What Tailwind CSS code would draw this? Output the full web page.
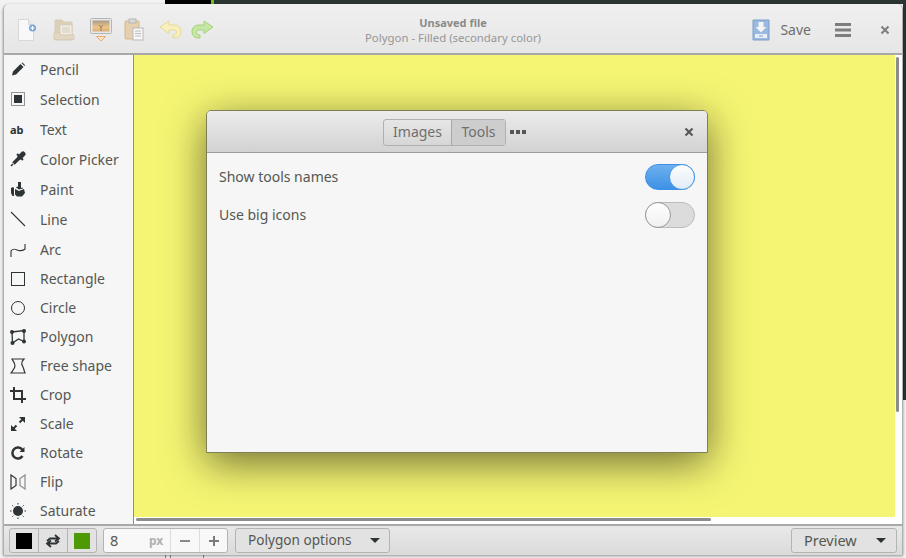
<!DOCTYPE html>
<html>
  <head>
    <meta charset="utf-8">
    <title>Drawing</title>
    <script src="https://cdn.jsdelivr.net/npm/@tailwindcss/browser@4"></script>
  </head>

  <body class="relative w-[906px] h-[558px] overflow-hidden bg-[#f2f2f2] font-['Noto_Sans',sans-serif]">
    <!-- desktop behind the window -->
    <div class="absolute left-[165px] top-0 w-[46px] h-[4px] bg-black"></div>
    <div class="absolute left-[211px] top-0 w-[3px] h-[4px] bg-[#73c016]"></div>
    <div class="absolute left-[214px] top-0 w-[692px] h-[4px] bg-[#2a3433]"></div>
    <div class="absolute left-[903px] top-0 w-[3px] h-[400px] bg-[#2a3433]"></div>
    <div class="absolute left-[165px] top-[555px] w-px h-[3px] bg-[#888]"></div>
    <div class="absolute left-[170px] top-[555px] w-px h-[3px] bg-[#888]"></div>
    <div class="absolute left-[203px] top-[555px] w-px h-[3px] bg-[#888]"></div>

    <!-- main window -->
    <div class="absolute left-[3px] top-[4px] w-[900px] h-[551px] flex flex-col rounded-t-[6px] overflow-hidden border-l border-r border-[#b0b0b0] bg-[#f6f6f6] shadow-[0_1px_3px_rgba(0,0,0,0.4)]">
      <!-- header bar -->
      <header class="h-[51px] shrink-0 grid grid-cols-[1fr_auto_1fr] items-center border-b-2 border-[#a8a8a8] bg-gradient-to-b from-[#f0f0f0] to-[#e6e6e6]">
        <div class="flex items-center pl-[13px] pt-[2px]">
          <svg class="w-[20px] h-[24px]" viewBox="0 0 20 24">
            <path d="M1.5 1.5h10l5 5v16h-15z" fill="#f8f8f8" stroke="#d8d8d8"/>
            <path d="M11.5 1.5v5h5" fill="#e8e8e8" stroke="#d8d8d8"/>
            <circle cx="15.5" cy="10" r="3.6" fill="#7da7d9"/>
            <path d="M13.5 10h4M15.5 8v4" stroke="#fff" stroke-width="1.2"/>
          </svg>
          <svg class="ml-[16px] w-[22px] h-[24px]" viewBox="0 0 22 24">
            <path d="M2 2h7l2 2h8v18H2z" fill="#dccfb9" stroke="#d8ccb6"/>
            <path d="M7 7h12v10H7z" fill="#f3efe6" stroke="#d6cdbb"/>
            <path d="M9 10h8M9 12h8M9 14h8" stroke="#cfc8ba"/>
            <path d="M1 15h6l1 2h13v4.500H1z" fill="#e3d7c3" stroke="#d8ccb6"/>
          </svg>
          <svg class="ml-[15px] w-[22px] h-[24px]" viewBox="0 0 22 24">
            <defs>
              <linearGradient id="sunset" x1="0" y1="0" x2="0" y2="1">
                <stop offset="0" stop-color="#a89c8c"/>
                <stop offset="0.6" stop-color="#eec584"/>
                <stop offset="1" stop-color="#d9ae7a"/>
              </linearGradient>
            </defs>
            <rect x="0.500" y="0.500" width="21" height="15" rx="1" fill="#e8e8e8" stroke="#b5b5b5"/>
            <rect x="2.500" y="2.500" width="17" height="11" fill="url(#sunset)"/>
            <path d="M11 13V8M11 9.500L9 7M11 9.500L13 7" stroke="#85766a" stroke-width="0.800" fill="none"/>
            <path d="M6.500 18.500h9l-4.500 4.500z" fill="#fbe7d0" stroke="#eda868"/>
          </svg>
          <svg class="ml-[12px] w-[20px] h-[24px]" viewBox="0 0 20 24">
            <rect x="1" y="3" width="14" height="18" rx="1" fill="#e6cfae" stroke="#d2b78f"/>
            <rect x="5" y="1" width="7" height="4" fill="#d8d8d8" stroke="#b5b5b5"/>
            <rect x="9" y="10" width="10" height="12" fill="#f8f8f8" stroke="#b9b9b9"/>
            <path d="M11 13h6M11 15.500h6M11 18h6" stroke="#b9b9b9"/>
          </svg>
          <svg class="ml-[15px] w-[23px] h-[19px]" viewBox="0 0 23 19">
            <path d="M10 1L1 7l9 6.500V10h4.500c2 0 3 .8 3 2.300S16 15 14 15v3h1.500c4 0 6.500-2.500 6.500-6.500S19 5 15 5h-5z" fill="#f7efc0" stroke="#e6d98e"/>
          </svg>
          <svg class="ml-[9px] w-[23px] h-[19px]" viewBox="0 0 23 19">
            <path d="M13 1l9 6-9 6.500V10H8.500c-2 0-3 .8-3 2.300S7 15 9 15v3H7.500C3.500 18 1 15.500 1 11.500S4 5 8 5h5z" fill="#c5e6a4" stroke="#a4d27a"/>
          </svg>
        </div>
        <div class="pt-[2px] text-center leading-[15px]">
          <div class="text-[11px] font-bold text-[#8a8a8a]">Unsaved file</div>
          <div class="text-[11.400px] text-[#969696]">Polygon - Filled (secondary color)</div>
        </div>
        <div class="flex items-center justify-end pr-[12px] pt-[2px]">
          <svg class="w-[18px] h-[22px]" viewBox="0 0 18 22">
            <path d="M1 1h16v20H1z" fill="#9ab9e0" stroke="#7f9fc8"/>
            <path d="M6.500 3h5v5h3l-5.500 5.500L3.500 8h3z" fill="#f4f4f4"/>
            <rect x="3" y="15" width="12" height="4" fill="#e8eef6"/>
            <path d="M7 17h4" stroke="#7f9fc8"/>
          </svg>
          <span class="ml-[10px] text-[14px] text-[#6e6e6e]">Save</span>
          <svg class="ml-[24px] w-[16px] h-[16px]" viewBox="0 0 16 16" fill="#7e7e7e">
            <rect y="1" width="16" height="3"/><rect y="6.500" width="16" height="3"/><rect y="12" width="16" height="3"/>
          </svg>
          <svg class="ml-[29px] w-[10px] h-[10px]" viewBox="0 0 10 10" stroke="#7e7e7e" stroke-width="2">
            <path d="M1.500 1.500l7 7M8.500 1.500l-7 7"/>
          </svg>
        </div>
      </header>

      <div class="flex-1 flex min-h-0">
        <!-- tools list -->
        <aside class="w-[129px] shrink-0 overflow-hidden bg-[#f6f6f6] text-[14px] text-[#555753] border-r border-[#8e8e8e] box-content">
          <div class="h-[30px] flex items-center pl-[6px] pb-[2px] gap-[14px]">
            <svg class="w-[16px] h-[16px]" viewBox="0 0 16 16" fill="#2e3436"><path d="M2 14.500l1-4L10.500 3l3 3L6 13.500zM11.500 2l1-.5 2.500 2.500-.5 1z"/></svg>
            <span>Pencil</span>
          </div>
          <div class="h-[30px] flex items-center pl-[6px] pb-[2px] gap-[14px]">
            <svg class="w-[16px] h-[16px]" viewBox="0 0 16 16"><rect x="4" y="4" width="8" height="8" fill="#2e3436"/><rect x="1.500" y="1.500" width="13" height="13" fill="none" stroke="#2e3436" stroke-dasharray="1 1"/></svg>
            <span>Selection</span>
          </div>
          <div class="h-[30px] flex items-center pl-[6px] pb-[2px] gap-[14px]">
            <span class="w-[16px] text-[11px] leading-none font-bold text-[#2e3436]">ab</span>
            <span>Text</span>
          </div>
          <div class="h-[30px] flex items-center pl-[6px] pb-[2px] gap-[14px]">
            <svg class="w-[16px] h-[16px]" viewBox="0 0 16 16" fill="none" stroke="#2e3436">
              <path d="M1 15l2-2" stroke-width="1.500"/>
              <path d="M3.500 12.500L9 7" stroke-width="3.500"/>
              <path d="M10 6l3-3" stroke-width="5" stroke-linecap="round"/>
              <path d="M7 3l6 6" stroke-width="2"/>
            </svg>
            <span>Color Picker</span>
          </div>
          <div class="h-[30px] flex items-center pl-[6px] pb-[2px] gap-[14px]">
            <svg class="w-[16px] h-[16px]" viewBox="0 0 16 16" fill="#2e3436">
              <path d="M8 1h3v6l1.500-.5.500 1-4 1-3-2 1-1 1 .5z"/>
              <path d="M1 7l2-1 1 1v8H2.500L1 12z"/>
              <path d="M5 8l4 2 5-2 1 4-3 3.500-5 0-2-2z"/>
            </svg>
            <span>Paint</span>
          </div>
          <div class="h-[30px] flex items-center pl-[6px] pb-[2px] gap-[14px]">
            <svg class="w-[16px] h-[16px]" viewBox="0 0 16 16" stroke="#2e3436" stroke-width="1.100"><path d="M1 1l14 14"/></svg>
            <span>Line</span>
          </div>
          <div class="h-[29px] flex items-center pl-[6px] gap-[14px]">
            <svg class="w-[16px] h-[16px]" viewBox="0 0 16 16" fill="none" stroke="#2e3436" stroke-width="1.100"><path d="M1 15V9c2-3 4-2 6-1s6 1 8-1V2"/></svg>
            <span>Arc</span>
          </div>
          <div class="h-[29px] flex items-center pl-[6px] gap-[14px]">
            <svg class="w-[16px] h-[16px]" viewBox="0 0 16 16" fill="none" stroke="#2e3436"><rect x="1.500" y="1.500" width="13" height="13"/></svg>
            <span>Rectangle</span>
          </div>
          <div class="h-[29px] flex items-center pl-[6px] gap-[14px]">
            <svg class="w-[16px] h-[16px]" viewBox="0 0 16 16" fill="none" stroke="#2e3436"><circle cx="8" cy="8" r="6.500"/></svg>
            <span>Circle</span>
          </div>
          <div class="h-[29px] flex items-center pl-[6px] gap-[14px]">
            <svg class="w-[16px] h-[16px]" viewBox="0 0 16 16" fill="#2e3436"><path d="M2 3l12-1.500 0 11-5.500-2.500-6 4z" fill="none" stroke="#2e3436" stroke-width="1.300"/><circle cx="2" cy="3" r="2"/><circle cx="14" cy="2" r="2"/><circle cx="14" cy="12.500" r="2"/><circle cx="2.500" cy="14" r="2"/></svg>
            <span>Polygon</span>
          </div>
          <div class="h-[29px] flex items-center pl-[6px] gap-[14px]">
            <svg class="w-[16px] h-[16px]" viewBox="0 0 16 16" fill="none" stroke="#2e3436" stroke-width="1.200"><path d="M2 1h12c-3 3-3 5-1 8 1 2 1 4 2 6H1c2-3 4-5 4-7 0-3-2-5-3-7z"/></svg>
            <span>Free shape</span>
          </div>
          <div class="h-[29px] flex items-center pl-[6px] gap-[14px]">
            <svg class="w-[16px] h-[16px]" viewBox="0 0 16 16" fill="none" stroke="#2e3436" stroke-width="2"><path d="M4 0v12h12M0 4h12v12"/></svg>
            <span>Crop</span>
          </div>
          <div class="h-[29px] flex items-center pl-[6px] gap-[14px]">
            <svg class="w-[16px] h-[16px]" viewBox="0 0 16 16" fill="#2e3436"><path d="M9 1h6v6z"/><path d="M7 15H1V9z"/><path d="M12.500 3.500L9.500 6.500M3.500 12.500l3-3" stroke="#2e3436" stroke-width="2"/></svg>
            <span>Scale</span>
          </div>
          <div class="h-[29px] flex items-center pl-[6px] gap-[14px]">
            <svg class="w-[16px] h-[16px]" viewBox="0 0 16 16" fill="none"><path d="M12.500 5A5.500 5.500 0 1 0 12.500 11" stroke="#2e3436" stroke-width="2.500"/><path d="M9.500 7H14.500V2z" fill="#2e3436"/></svg>
            <span>Rotate</span>
          </div>
          <div class="h-[29px] flex items-center pl-[6px] gap-[14px]">
            <svg class="w-[16px] h-[16px]" viewBox="0 0 16 16" fill="none" stroke-width="1.200"><path d="M1 1l5 3.500v7L1 15z" stroke="#2e3436"/><path d="M15 1l-5 3.500v7l5 3.500z" stroke="#8a8a8a"/></svg>
            <span>Flip</span>
          </div>
          <div class="h-[29px] flex items-center pl-[6px] gap-[14px]">
            <svg class="w-[16px] h-[16px]" viewBox="0 0 16 16"><circle cx="8" cy="8" r="5" fill="#2e3436"/><path d="M8 0v1.500M8 14.500V16M0 8h1.500M14.500 8H16M2.300 2.300l1 1M12.700 12.700l1 1M2.300 13.700l1-1M12.700 3.300l1-1" stroke="#2e3436"/></svg>
            <span>Saturate</span>
          </div>
        </aside>

        <!-- drawing area -->
        <main class="relative flex-1 min-w-0 bg-white">
          <div class="w-[761px] h-[462px] bg-[#f5f573]"></div>
          <div class="absolute left-[2px] bottom-[3px] w-[575px] h-[3px] rounded-full bg-[#8c8c8c]"></div>
          <div class="absolute right-[3px] top-[2px] w-[3px] h-[355px] rounded-full bg-[#8c8c8c]"></div>
        </main>
      </div>

      <!-- bottom bar -->
      <footer class="h-[31px] shrink-0 flex items-center justify-between border-t-2 border-[#a8a8a8] bg-gradient-to-b from-[#e9e9e9] to-[#dadada] pl-[5px] pr-[5px] text-[14px] text-[#555753]">
        <div class="flex items-center">
          <div class="h-[25px] flex rounded-[3px] border border-[#b4b4b4] bg-[#e2e2e2]">
            <div class="w-[29px] flex items-center justify-center border-r border-[#b4b4b4]"><div class="w-[16px] h-[16px] bg-black"></div></div>
            <div class="w-[29px] flex items-center justify-center border-r border-[#b4b4b4]">
              <svg class="w-[16px] h-[14px]" viewBox="0 0 16 14" fill="none" stroke="#2e3436" stroke-width="1.800"><path d="M2 7l3-2.500h8M10 1l4 3.500L10 7.500M14 7l-3 2.500H3M6 6.500L2 9.500 6 13"/></svg>
            </div>
            <div class="w-[28px] flex items-center justify-center"><div class="w-[16px] h-[16px] bg-[#4e9a06]"></div></div>
          </div>
          <div class="ml-[6px] w-[125px] h-[25px] flex items-center rounded-[3px] border border-[#b4b4b4] bg-[#f8f8f8]">
            <span class="w-[45px] pl-[6px] text-[14.500px]">8</span>
            <span class="w-[21px] text-[12px] font-bold text-[#b0b0b0]">px</span>
            <span class="w-[29px] h-full flex items-center justify-center border-l border-[#dcdcdc]"><svg class="w-[10px] h-[2px]" viewBox="0 0 10 2" fill="#8a8a8a"><rect width="10" height="2"/></svg></span>
            <span class="flex-1 h-full flex items-center justify-center border-l border-[#dcdcdc]"><svg class="w-[10px] h-[10px]" viewBox="0 0 10 10" fill="#7a7a7a"><path d="M4 0h2v4h4v2H6v4H4V6H0V4h4z"/></svg></span>
          </div>
          <div class="ml-[7px] w-[155px] h-[25px] flex items-center justify-between pl-[12px] pr-[9px] rounded-[3px] border border-[#b4b4b4] bg-[#e2e2e2]">
            <span class="text-[13.600px]">Polygon options</span>
            <svg class="w-[10px] h-[5px]" viewBox="0 0 10 5" fill="#2e3436"><path d="M0 0h10L5 5z"/></svg>
          </div>
        </div>
        <div class="w-[106px] h-[25px] flex items-center justify-between pl-[12px] pr-[10px] rounded-[3px] border border-[#b4b4b4] bg-[#e2e2e2]">
          <span class="text-[14.500px]">Preview</span>
          <svg class="w-[10px] h-[5px]" viewBox="0 0 10 5" fill="#2e3436"><path d="M0 0h10L5 5z"/></svg>
        </div>
      </footer>
    </div>

    <!-- settings dialog over the window -->
    <div class="absolute left-[206px] top-[110px] w-[502px] h-[343px] flex flex-col rounded-t-[5px] overflow-hidden border border-[#7f7f55] bg-[#f6f6f6] shadow-[0_10px_42px_rgba(0,0,0,0.55)] text-[14px] text-[#555753]">
      <div class="h-[42px] shrink-0 relative flex items-center justify-center border-b border-[#9c9c9c] bg-gradient-to-b from-[#ececec] to-[#d2d2d2]">
        <div class="flex items-center h-[27px] mt-[1px] -ml-[5px] rounded-[3px] border border-[#b0b0b0] text-[#6f6f6f]">
          <span class="w-[67px] h-full pb-[2px] flex items-center justify-center">Images</span>
          <span class="w-[54px] h-full pb-[2px] flex items-center justify-center border-l border-[#a8a8a8] bg-[#cdcdcd]">Tools</span>
        </div>
        <div class="flex gap-[2px] ml-[4px]">
          <span class="w-[4px] h-[4px] bg-[#555]"></span><span class="w-[4px] h-[4px] bg-[#555]"></span><span class="w-[4px] h-[4px] bg-[#555]"></span>
        </div>
        <svg class="absolute right-[13px] top-[16px] w-[10px] h-[10px]" viewBox="0 0 10 10" stroke="#555" stroke-width="2"><path d="M1.500 1.500l7 7M8.500 1.500l-7 7"/></svg>
      </div>
      <div class="px-[12px] pt-[11px] flex flex-col gap-[12px]">
        <div class="h-[26px] flex items-center justify-between">
          <span class="pb-[2px]">Show tools names</span>
          <div class="relative w-[50px] h-[26px] rounded-full bg-gradient-to-b from-[#6db0ee] to-[#3d91e6] border border-[#3d91e6]">
            <div class="absolute right-[-1px] top-[-1px] w-[26px] h-[26px] rounded-full bg-gradient-to-b from-[#fdfdfd] to-[#e2ecf6] border border-[#4a9be8]"></div>
          </div>
        </div>
        <div class="h-[26px] flex items-center justify-between">
          <span class="pb-[2px]">Use big icons</span>
          <div class="relative w-[50px] h-[26px] rounded-full bg-[#dcdcdc] border border-[#bcbcbc]">
            <div class="absolute left-[-1px] top-[-1px] w-[26px] h-[26px] rounded-full bg-gradient-to-b from-[#ffffff] to-[#f0f0f0] border border-[#9a9a9a]"></div>
          </div>
        </div>
      </div>
    </div>
  </body>
</html>
